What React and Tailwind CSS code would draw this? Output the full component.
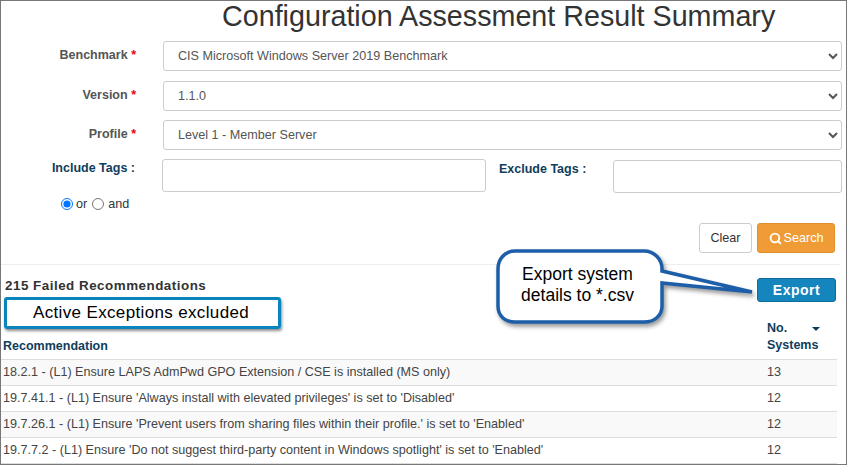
import React from 'react';
import { Search } from 'lucide-react';

const rows = [
  { name: '18.2.1 - (L1) Ensure LAPS AdmPwd GPO Extension / CSE is installed (MS only)', count: 13 },
  { name: "19.7.41.1 - (L1) Ensure 'Always install with elevated privileges' is set to 'Disabled'", count: 12 },
  { name: "19.7.26.1 - (L1) Ensure 'Prevent users from sharing files within their profile.' is set to 'Enabled'", count: 12 },
  { name: "19.7.7.2 - (L1) Ensure 'Do not suggest third-party content in Windows spotlight' is set to 'Enabled'", count: 12 },
];

const SelectRow = ({ label, value, className }) => (
  <div className={`flex items-start ${className}`}>
    <label className="w-[135px] shrink-0 pt-[5px] text-right text-[12.5px] leading-[18px] font-bold text-[#555]">
      {label} <span className="text-red-600">*</span>
    </label>
    <select
      defaultValue={value}
      className="ml-[27px] h-[30px] w-[679px] rounded-[3px] border border-[#ccc] bg-white pl-[10px] text-[12.6px] text-[#555]"
    >
      <option>{value}</option>
    </select>
  </div>
);

export default function App() {
  return (
    <div className="relative h-[465px] w-[847px] overflow-hidden border border-[#777] bg-white font-['Liberation_Sans',Arial,sans-serif]">
      <h1 className="ml-[221px] h-[40px] text-[28.7px] leading-[31px] whitespace-nowrap text-[#333]">
        Configuration Assessment Result Summary
      </h1>

      <SelectRow label="Benchmark" value="CIS Microsoft Windows Server 2019 Benchmark" />
      <SelectRow label="Version" value="1.1.0" className="mt-[10px]" />
      <SelectRow label="Profile" value="Level 1 - Member Server" className="mt-[9px]" />

      {/* Tags */}
      <div className="mt-[9px] flex items-start">
        <div className="w-[134px] shrink-0">
          <label className="block pt-[1px] text-right text-[12.5px] leading-[16px] font-bold text-[#0f3d5c]">Include Tags :</label>
          <div className="mt-[20px] flex items-center pl-[60px] text-[12.6px] leading-[16px] text-[#333]">
            <input type="radio" name="op" defaultChecked className="m-0 h-[12px] w-[12px]" />
            <span className="ml-[3px]">or</span>
            <input type="radio" name="op" className="m-0 ml-[5px] h-[12px] w-[12px]" />
            <span className="ml-[4px]">and</span>
          </div>
        </div>
        <input className="ml-[27px] h-[33px] w-[324px] rounded-[3px] border border-[#ccc]" />
        <label className="ml-[13px] w-[114px] pt-[2px] text-[12.5px] leading-[16px] font-bold text-[#0f3d5c]">Exclude Tags :</label>
        <input className="mt-[1px] h-[33px] w-[229px] rounded-[3px] border border-[#ccc]" />
      </div>

      {/* Buttons */}
      <div className="mt-[11px] flex justify-end gap-[5px] pr-[11px]">
        <button className="h-[30px] w-[53px] rounded-[3px] border border-[#ccc] bg-white text-[12.6px] text-[#333]">Clear</button>
        <button className="flex h-[30px] w-[78px] items-center justify-center gap-[2px] rounded-[3px] border border-[#e08e2b] bg-[#f09c36] text-[12.6px] text-white">
          <Search size={13} strokeWidth={3.5} />
          Search
        </button>
      </div>

      <div className="mt-[11px] mr-[6px] border-t border-[#eee]" />

      {/* Results header */}
      <div className="flex w-[836px] border-b border-[#ddd]">
        <div className="flex-1 pb-[5px]">
          <div className="pt-[13px] pl-[4px] text-[13.4px] leading-[16px] font-bold tracking-[0.5px] text-[#333]">
            215 Failed Recommendations
          </div>
          <div className="mt-[3px] ml-[3px] flex h-[32px] w-[277px] items-center rounded-[3px] border-[3px] border-[#0a84bd] pl-[26px] text-[17px] tracking-[0.35px] text-black shadow-[1px_2px_3px_rgba(0,0,0,0.45)]">
            Active Exceptions excluded
          </div>
          <div className="mt-[9px] pl-[2px] text-[12.5px] leading-[16px] font-bold text-[#0f3d5c]">Recommendation</div>
        </div>
        <div className="w-[80px]">
          <button className="mt-[13px] h-[24px] w-[79px] rounded-[3px] border border-[#0f6d9c] bg-[#1485bd] text-[14px] font-bold tracking-[0.5px] text-white">
            Export
          </button>
          <div className="mt-[18px] ml-[10px] text-[12.5px] leading-[17px] font-bold text-[#0f3d5c]">
            <span className="flex items-center justify-between pr-[17px]">
              No.
              <svg width="8" height="4" viewBox="0 0 8 4"><path d="M0 0h8L4 4z" fill="#0f3d5c" /></svg>
            </span>
            Systems
          </div>
        </div>
      </div>

      {/* Rows */}
      {rows.map((row, i) => (
        <div
          key={row.name}
          className={`flex h-[26px] w-[836px] items-center border-b border-[#ddd] text-[12.6px] text-[#444] ${i % 2 === 0 ? 'bg-[#f9f9f9]' : 'bg-white'}`}
        >
          <div className="flex-1 pl-[2px] whitespace-nowrap">{row.name}</div>
          <div className="w-[70px]">{row.count}</div>
        </div>
      ))}

      {/* Callout */}
      <div className="absolute top-[248px] left-[495px] h-[78px] w-[262px]">
        <svg width="262" height="78" viewBox="0 0 262 78" className="absolute inset-0 drop-shadow-[2px_3px_2px_rgba(0,0,0,0.4)]">
          <path
            d="M19 2H148C158 2 166 10 166 20V22L256 43L166 34V57C166 67 158 73 148 73H19C9 73 2 67 2 57V20C2 10 9 2 19 2Z"
            fill="#fff"
            stroke="#1c5ea8"
            strokeWidth="3.5"
          />
        </svg>
        <div className="absolute top-[15px] left-0 w-[163px] text-center text-[17.5px] leading-[21px] text-black">
          Export system
          <br />
          details to *.csv
        </div>
      </div>
    </div>
  );
}
